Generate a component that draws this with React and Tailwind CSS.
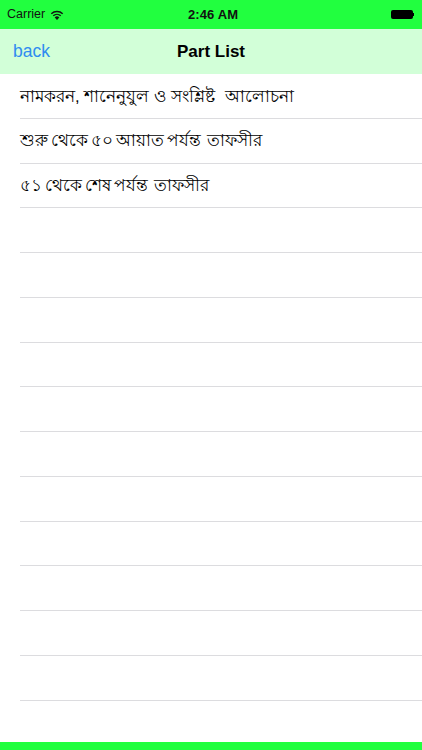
const parts = [
  { title: 'নামকরন, শানেনুযুল ও সংশ্লিষ্ট  আলোচনা', spacing: '' },
  { title: 'শুরু থেকে ৫০ আয়াত পর্যন্ত  তাফসীর', spacing: '[word-spacing:-1.6px]' },
  { title: '৫১ থেকে শেষ পর্যন্ত  তাফসীর', spacing: '[word-spacing:-1.6px]' },
  ...Array(11).fill({ title: '', spacing: '' }),
];

function PartRow({ title, spacing }) {
  return (
    <div className="h-[44.75px] shrink-0 pl-[20px]">
      <div className={`flex h-full items-center border-b border-[#dcdcdf] text-[16.5px] whitespace-pre text-black ${spacing}`}>
        {title}
      </div>
    </div>
  );
}

export default function App() {
  return (
    <div className="flex h-[750px] w-[422px] flex-col overflow-hidden bg-white font-['Liberation_Sans','Noto_Sans',sans-serif]">
      <div className="relative flex h-[29px] shrink-0 items-center justify-between bg-[#21ff3f] pr-[8px] pl-[7px] text-[12.5px] text-[#111]">
        <div className="flex items-center gap-[5px]">
          <span>Carrier</span>
          <svg width="14" height="10" viewBox="0 0 14 10" fill="#111">
            <path d="M7 10 L4.7 7.4 A3.4 3.4 0 0 1 9.3 7.4 Z" />
            <path d="M3.7 6.3 L2.8 5.3 A6.2 6.2 0 0 1 11.2 5.3 L10.3 6.3 A4.9 4.9 0 0 0 3.7 6.3 Z" />
            <path d="M1.8 4.3 L0.8 3.2 A9 9 0 0 1 13.2 3.2 L12.2 4.3 A7.6 7.6 0 0 0 1.8 4.3 Z" />
          </svg>
        </div>
        <span className="absolute left-[188px] text-[13px] font-bold tracking-[0.1px]">2:46 AM</span>
        <div className="flex items-center">
          <div className="h-[9px] w-[22px] rounded-[2px] bg-black" />
          <div className="h-[3px] w-[1.5px] bg-black" />
        </div>
      </div>
      <div className="relative flex h-[45px] shrink-0 items-center justify-center bg-[#d2ffd8]">
        <span className="absolute left-[13px] text-[17.5px] text-[#2f8cf0]">back</span>
        <span className="text-[17px] font-bold text-black">Part List</span>
      </div>
      <div className="flex min-h-0 flex-1 flex-col">
        {parts.map((part, i) => (
          <PartRow key={i} title={part.title} spacing={part.spacing} />
        ))}
      </div>
      <div className="h-[8px] shrink-0 bg-[#21ff3f]" />
    </div>
  );
}
